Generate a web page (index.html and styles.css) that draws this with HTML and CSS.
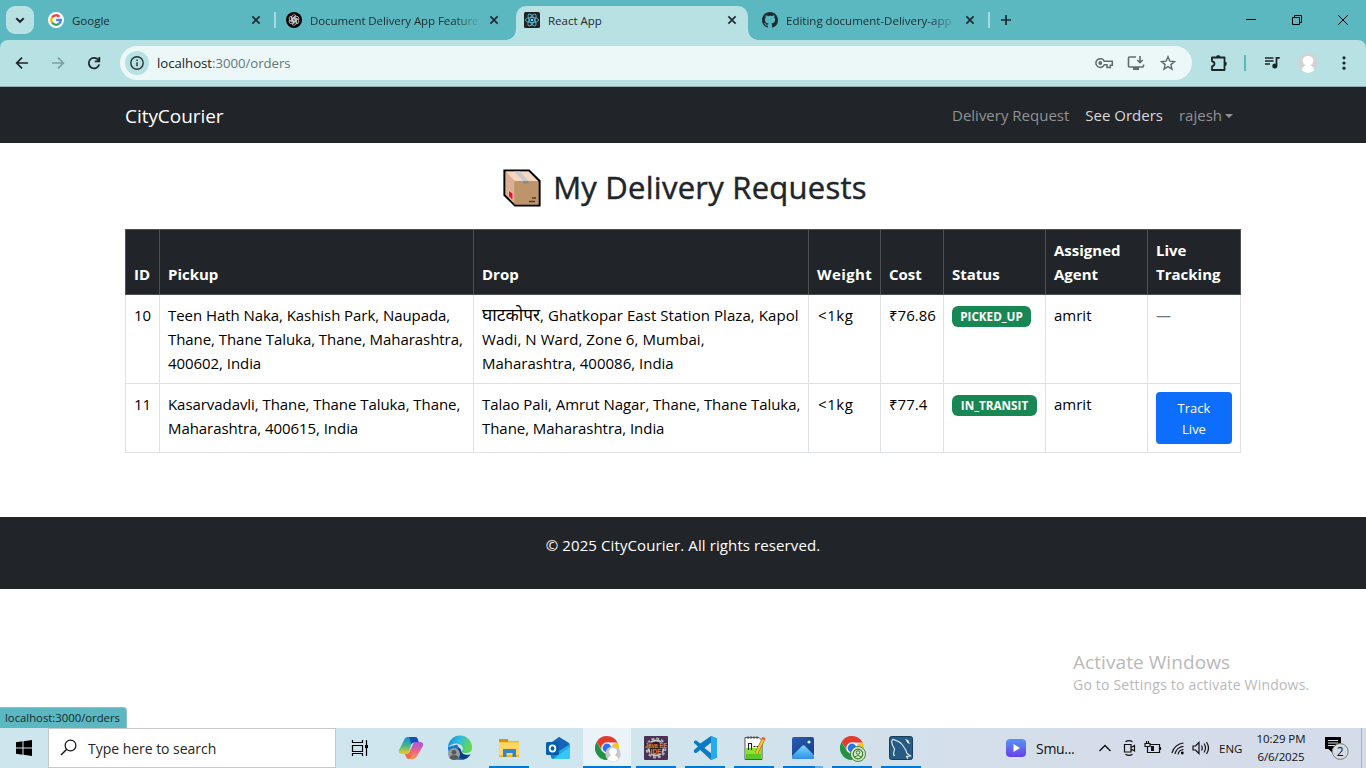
FILE: index.html
```html
<!DOCTYPE html>
<html lang="en">
<head>
<meta charset="utf-8">
<title>React App</title>
<link rel="stylesheet" href="styles.css">
</head>
<body>
<svg width="0" height="0" class="defs">
  <defs>
    <symbol id="x" viewBox="0 0 16 16"><path d="M4.4 4.4l7.2 7.2M11.6 4.4l-7.2 7.2" stroke="#1f2b2e" stroke-width="1.7" fill="none"/></symbol>
    <symbol id="chrome" viewBox="0 0 24 24">
      <path d="M12 12L22.4 6A12 12 0 0 1 12 24z" fill="#fbc116"/>
      <path d="M12 6.4h10.6A12 12 0 0 0 1.6 6l5.3 8z" fill="#e33b2e"/>
      <path d="M1.6 6l5.4 9 5 2.500 5-3L12 24A12 12 0 0 1 1.6 6z" fill="#229342"/>
      <circle cx="12" cy="12" r="5.7" fill="#fff"/><circle cx="12" cy="12" r="4.4" fill="#2b74e8"/>
    </symbol>
  </defs>
</svg>

<div class="tabstrip">
  <div class="tab-search"><svg width="12" height="12" viewBox="0 0 12 12"><path d="M2.3 4.2L6 7.8l3.7-3.6" fill="none" stroke="#1d2426" stroke-width="1.9"/></svg></div>
  <div class="tab tab-one">
    <svg width="16" height="16" viewBox="0 0 16 16"><circle cx="8" cy="8" r="8" fill="#fff"/><g fill="none" stroke-width="2.3"><path d="M4 5.5A4.8 4.8 0 0 1 11.5 4.7" stroke="#ea4335"/><path d="M4 5.5a4.8 4.8 0 0 0 0 5" stroke="#fbbc05"/><path d="M4 10.5a4.8 4.8 0 0 0 7.1 1.2" stroke="#34a853"/><path d="M11.1 11.7A4.8 4.8 0 0 0 12.8 8H8.2" stroke="#4285f4"/></g></svg>
    <span class="tab-title">Google</span><svg class="close" width="16" height="16"><use href="#x"/></svg><i class="sep"></i>
  </div>
  <div class="tab tab-two">
    <svg width="16" height="16" viewBox="0 0 16 16"><circle cx="8" cy="8" r="8" fill="#050505"/><g fill="none" stroke="#e9e9e9" stroke-width=".7"><path id="petal" d="M5.800 9.200V5a2.300 2.300 0 0 1 4.200-1.300L6.900 5.600v3.600"/><use href="#petal" transform="rotate(60 8 8)"/><use href="#petal" transform="rotate(120 8 8)"/><use href="#petal" transform="rotate(180 8 8)"/><use href="#petal" transform="rotate(240 8 8)"/><use href="#petal" transform="rotate(300 8 8)"/></g></svg>
    <span class="tab-title fade">Document Delivery App Feature</span><svg class="close" width="16" height="16"><use href="#x"/></svg>
  </div>
  <div class="tab tab-active">
    <svg width="16" height="16" viewBox="0 0 16 16"><rect width="16" height="16" rx="1.500" fill="#222"/><g fill="none" stroke="#58b5cf" stroke-width=".9"><ellipse cx="8" cy="8" rx="6.600" ry="2.600"/><ellipse cx="8" cy="8" rx="6.600" ry="2.600" transform="rotate(60 8 8)"/><ellipse cx="8" cy="8" rx="6.600" ry="2.600" transform="rotate(120 8 8)"/></g><circle cx="8" cy="8" r="1.300" fill="#61dafb"/></svg>
    <span class="tab-title">React App</span><svg class="close" width="16" height="16"><use href="#x"/></svg>
  </div>
  <div class="tab tab-four">
    <svg width="16" height="16" viewBox="0 0 16 16"><path fill="#1f2b30" d="M8 0C3.58 0 0 3.58 0 8c0 3.54 2.29 6.53 5.47 7.59.4.07.55-.17.55-.38 0-.19-.01-.82-.01-1.49-2.01.37-2.53-.49-2.69-.94-.09-.23-.48-.94-.82-1.13-.28-.15-.68-.52-.01-.53.63-.01 1.08.58 1.23.82.72 1.21 1.87.87 2.33.66.07-.52.28-.87.51-1.07-1.78-.2-3.64-.89-3.64-3.95 0-.87.31-1.59.82-2.15-.08-.2-.36-1.02.08-2.12 0 0 .67-.21 2.2.82.64-.18 1.32-.27 2-.27s1.36.09 2 .27c1.53-1.04 2.2-.82 2.2-.82.44 1.1.16 1.92.08 2.12.51.56.82 1.27.82 2.15 0 3.07-1.87 3.75-3.65 3.95.29.25.54.73.54 1.48 0 1.07-.01 1.93-.01 2.2 0 .21.15.46.55.38A8.01 8.01 0 0 0 16 8c0-4.42-3.58-8-8-8"/></svg>
    <span class="tab-title fade fade-far">Editing document-Delivery-app</span><svg class="close" width="16" height="16"><use href="#x"/></svg><i class="sep"></i>
  </div>
  <svg class="new-tab" width="16" height="16" viewBox="0 0 16 16"><path d="M8 3v10M3 8h10" stroke="#1d2a2d" stroke-width="1.700"/></svg>
  <div class="window-controls">
    <svg width="46" height="40" viewBox="0 0 46 40"><path d="M18 19.500h10" stroke="#000"/></svg>
    <svg width="46" height="40" viewBox="0 0 46 40"><path d="M18.500 17.500h7v7h-7zM20.500 17.500v-2h7v7h-2" fill="none" stroke="#000"/></svg>
    <svg width="46" height="40" viewBox="0 0 46 40"><path d="M18 15l10 10M28 15L18 25" fill="none" stroke="#000"/></svg>
  </div>
</div>

<div class="toolbar-back"><div class="toolbar">
  <svg class="nav" width="16" height="16" viewBox="0 0 16 16"><path d="M14 8H3M8 2.700L2.700 8 8 13.300" fill="none" stroke="#1d2426" stroke-width="1.700"/></svg>
  <svg class="nav" width="16" height="16" viewBox="0 0 16 16"><path d="M2 8h11M8 2.700L13.300 8 8 13.300" fill="none" stroke="#7f9da0" stroke-width="1.700"/></svg>
  <svg class="nav" width="16" height="16" viewBox="0 0 16 16"><path d="M12.500 5.200A5.300 5.300 0 1 0 13.200 9.400M13.300 2v4.400H8.800" fill="none" stroke="#1d2426" stroke-width="1.800"/></svg>
  <div class="omnibox">
    <span class="info"><svg width="16" height="16" viewBox="0 0 16 16"><circle cx="8" cy="8" r="6.200" fill="none" stroke="#263436" stroke-width="1.400"/><path d="M8 7.200v4M8 4.600v1.500" stroke="#263436" stroke-width="1.400"/></svg></span>
    <span class="url"><b>localhost</b>:3000/orders</span>
    <svg width="20" height="16" viewBox="0 0 20 16"><g fill="none" stroke="#5f6b6e" stroke-width="1.500"><path d="M10.300 6.300h8v4h-2v2.200h-3.300v-2.700h-2.700A4.400 4.400 0 1 1 10.300 6.300z"/></g><circle cx="6.300" cy="8" r="1.900" fill="#5f6b6e"/></svg>
    <svg class="install" width="18" height="16" viewBox="0 0 18 16"><path d="M9 2H2.500q-1 0-1 1v8q0 1 1 1h13q1 0 1-1V9.500M13 1v6.500M10.300 5L13 7.700 15.700 5" fill="none" stroke="#5f6b6e" stroke-width="1.600"/><path d="M6 12h6v3H6z" fill="#5f6b6e"/></svg>
    <svg class="star" width="16" height="16" viewBox="0 0 16 16"><path d="M8 1.800l1.800 4.300 4.700.4-3.600 3.100 1.100 4.600L8 11.700l-4 2.500 1.100-4.600L1.500 6.500l4.700-.4z" fill="none" stroke="#5f6b6e" stroke-width="1.400"/></svg>
  </div>
  <svg class="puzzle" width="18" height="18" viewBox="0 0 18 18"><path d="M2 3.500h12.500V16H2v-3.700c3.300-.4 3.300-4.600 0-5z" fill="none" stroke="#1d2426" stroke-width="1.800" stroke-linejoin="round"/><path d="M6 3.500a2.200 2.500 0 0 1 4.400 0zM14.500 7.500a2.300 2.200 0 0 1 0 4.400z" fill="#1d2426"/></svg>
  <i class="tool-sep"></i>
  <svg class="media" width="16" height="16" viewBox="0 0 16 16"><path d="M1 3h8.500M1 6h8.500M1 9h5M12.500 11V2.800h3.200" stroke="#1d2426" stroke-width="1.700" fill="none"/><circle cx="10.800" cy="11" r="2.500" fill="#1d2426"/></svg>
  <svg class="avatar" width="20" height="20" viewBox="0 0 20 20"><circle cx="10" cy="10" r="10" fill="#d2d1d3"/><path d="M3.800 17.300q.7-4 3.800-4.700Q4.600 10.500 4.600 7.500 5 3 10 3t5.400 4.500q0 3-3 5.100 3.100.7 3.800 4.700Q13.500 20 10 20t-6.200-2.700z" fill="#fff"/></svg>
  <svg class="dots" width="16" height="16" viewBox="0 0 16 16"><g fill="#1d2426"><circle cx="8" cy="2.800" r="1.600"/><circle cx="8" cy="8" r="1.600"/><circle cx="8" cy="13.200" r="1.600"/></g></svg>
</div></div>

<main class="viewport">
  <nav class="navbar">
    <span class="brand">CityCourier</span>
    <span class="links"><span class="link">Delivery Request</span><span class="link current">See Orders</span><span class="link">rajesh<i class="caret"></i></span></span>
  </nav>
  <h2 class="heading">
    <svg width="38" height="38" viewBox="0 0 38 38"><path d="M1.500 1.500H26L36.500 12v24.500H12L1.500 26z" fill="#c19a6b" stroke="#000" stroke-width="2.200"/><path d="M2.500 2.500H25.600L35 12H11.500z" fill="#f6d6c0"/><path d="M2.500 3l9 9v23L2.500 25.600z" fill="#d9b093"/><path d="M11.500 12.500h24v23h-24z" fill="#be946a"/><path d="M11 2.500h6L25.500 12H20z" fill="#c9c9c9"/><path d="M20 12h5.500v2.500H20z" fill="#8d8983"/><path d="M5.500 21l4.500 3v7l-4.500-4z" fill="#f6c4b8"/><path d="M6 22l3.500 2.500v6L6 27.300z" fill="#e81224"/><path d="M29 29h4M26 32.500h6" stroke="#4b3c30" stroke-width="1.300"/></svg>
    <span class="heading-text">My Delivery Requests</span>
  </h2>
  <table class="orders">
    <colgroup><col class="c-id"><col class="c-pick"><col class="c-drop"><col class="c-weight"><col class="c-cost"><col class="c-status"><col class="c-agent"><col class="c-live"></colgroup>
    <thead><tr><th>ID</th><th>Pickup</th><th>Drop</th><th class="wide">Weight</th><th>Cost</th><th>Status</th><th>Assigned<br>Agent</th><th>Live<br>Tracking</th></tr></thead>
    <tbody>
      <tr class="r1"><td>10</td><td class="pickup">Teen Hath Naka, Kashish Park, Naupada,<br>Thane, Thane Taluka, Thane, Maharashtra,<br>400602, India</td><td><span class="hindi">घाटकोपर</span><span class="loose">, Ghatkopar East Station Plaza, Kapol<br>Wadi, N Ward, Zone 6, Mumbai,</span><br>Maharashtra, 400086, India</td><td class="weight">&lt;1kg</td><td>₹76.86</td><td><span class="badge picked">PICKED_UP</span></td><td>amrit</td><td class="muted">—</td></tr>
      <tr class="r2"><td>11</td><td class="pickup">Kasarvadavli, Thane, Thane Taluka, Thane,<br>Maharashtra, 400615, India</td><td class="tight">Talao Pali, Amrut Nagar, Thane, Thane Taluka,<br>Thane, Maharashtra, India</td><td class="weight">&lt;1kg</td><td>₹77.4</td><td><span class="badge transit">IN_TRANSIT</span></td><td>amrit</td><td><span class="btn">Track<br>Live</span></td></tr>
    </tbody>
  </table>
  <footer class="footer"><span>© 2025 CityCourier. All rights reserved.</span></footer>
  <div class="watermark"><p class="wm-title">Activate Windows</p><p class="wm-text">Go to Settings to activate Windows.</p></div>
  <div class="status-bubble"><span>localhost:3000/orders</span></div>
</main>

<div class="taskbar">
  <div class="start"><svg width="18" height="18" viewBox="0 0 18 18"><path d="M1 3.200L7.500 2.300v6.200H1zM8.500 2.200L17 1v7.500H8.500zM1 9.500h6.500v6.200L1 14.800zM8.500 9.500H17V17l-8.500-1.200z" fill="#000"/></svg></div>
  <div class="search"><svg width="18" height="18" viewBox="0 0 18 18"><circle cx="10.500" cy="6.500" r="5.400" fill="none" stroke="#111" stroke-width="1.200"/><path d="M6.500 10.500L1 16" stroke="#111" stroke-width="1.400"/></svg><span>Type here to search</span></div>
  <div class="apps">
    <div class="app taskview"><svg width="24" height="24" viewBox="0 0 24 24"><path d="M4.500 4v2.500h10V4M4.500 9.500h10v6h-10zM4.500 20v-2.500h10V20M18.500 4v16" fill="none" stroke="#000" stroke-width="1.200"/><path d="M17 9h3v3h-3z"/></svg></div>
    <div class="app"><svg width="26" height="24" viewBox="0 0 26 24"><defs><linearGradient id="c1" x1="0" y1="0" x2="0" y2="1"><stop offset="0" stop-color="#168bdd"/><stop offset=".5" stop-color="#42b58e"/><stop offset="1" stop-color="#f2cd17"/></linearGradient><linearGradient id="c2" x1="0" y1="0" x2="0" y2="1"><stop offset="0" stop-color="#a05be0"/><stop offset=".5" stop-color="#e95f91"/><stop offset="1" stop-color="#f79a4e"/></linearGradient></defs><path d="M6 4q1-3 4-3h7q2 0 2.700 2l1 3.500H16q-2 0-2.700 2L11 16q-.8 2-3 2H4q-4 0-3-4z" fill="url(#c1)"/><path d="M11 1h6q2 0 2.700 2l1 3.500H16q-2 0-2.700 2z" fill="#174fb9"/><path d="M19 20q-1 3-4 3h-4q-2 0-2.700-2L7 18h2q2 0 2.700-2L15 8q.8-2 3-2h4q4 0 3 4z" fill="url(#c2)"/><path d="M7 18h2q2 0 2.700-2l1.300-3 .5 7q-.5 2-2.500 3-2 0-2.700-2z" fill="#f06a42"/></svg></div>
    <div class="app"><svg width="26" height="26" viewBox="0 0 26 26"><defs><linearGradient id="e1" x1="0" y1="0" x2="1" y2=".3"><stop stop-color="#1684d8"/><stop offset=".5" stop-color="#30bde0"/><stop offset="1" stop-color="#62d850"/></linearGradient></defs><path d="M1 12A12 12 0 0 0 13 25q7 0 10.500-5.500Q15 21 14 15.500l-4-6z" fill="#1678c8"/><path d="M1 12A12 12 0 0 1 25 13q0 5-6 5-5 0-4-2 2-3-1-6Q8 6 1 12z" fill="url(#e1)"/><path d="M10.500 14q-2 9 6 10.500 4.500-1.500 7-5-8 2-9.500-4l-1-2.500z" fill="#123c82"/><circle cx="7" cy="19" r="6" fill="#989b9d"/><circle cx="7" cy="17.300" r="2.400" fill="#56595a"/><path d="M2.500 23q.5-3 4.500-3t4.500 3Q7 27 2.500 23z" fill="#56595a"/></svg></div>
    <div class="app running"><svg width="24" height="24" viewBox="0 0 24 24"><path d="M2 3h8l2 2h10v16H2z" fill="#f1b91e"/><path d="M2 3h9v3H2z" fill="#d9920c"/><path d="M2 6.500h20.500V19H2z" fill="#ffd766"/><path d="M6 13h13v8h-3.500v-4H9.500v4H6z" fill="#3984c8"/></svg></div>
    <div class="app"><svg width="26" height="24" viewBox="0 0 26 24"><path d="M4 8L14 1l10 6v14q0 2-2 2H8q-2 0-2-2z" fill="#1486d8"/><path d="M14 1l11 7-11 7-8-7z" fill="#1663b8"/><path d="M25 8v13q0 2-2 2h-8l-5-5z" fill="#26a8ec"/><path d="M25 11v10q0 2-2 2H8z" fill="#37c7f5"/><rect x="1" y="6" width="13" height="13" rx="1.500" fill="#075eaf"/><ellipse cx="7.500" cy="12.500" rx="2.800" ry="3.200" fill="none" stroke="#fff" stroke-width="1.800"/></svg></div>
    <div class="app selected"><svg width="28" height="28" viewBox="0 0 28 28"><use href="#chrome" x="2" y="2" width="24" height="24"/><circle cx="20" cy="20" r="7.700" fill="#c7c7c9"/><path d="M14.500 25q1-3 3.500-3.500-2-2-2-4.500 1-3 4-3t4 3q0 2.500-2 4.500 2.500.5 3.500 3.500-5.500 5-11 0z" fill="#fff"/></svg></div>
    <div class="app running"><svg class="eclipse" width="24" height="24" viewBox="0 0 24 24"><rect width="24" height="24" rx="1" fill="#493158"/><circle cx="12" cy="12" r="7.500" fill="#242229" stroke="#c8c3c3" stroke-width="2"/><circle cx="12" cy="12" r="9.500" fill="none" stroke="#b6aeb2" stroke-width="2" stroke-dasharray="3 1.970"/><path d="M1 6.500h22v6H1zM6 12.500h12v5.500H6z" fill="#2a2029" opacity=".75"/><text x="12" y="11.800" class="jee" textLength="22" lengthAdjust="spacingAndGlyphs">Java EE</text><text x="12" y="17.700" class="jee">IDE</text></svg></div>
    <div class="app running"><svg width="24" height="24" viewBox="0 0 24 24"><path d="M18 0l6 2.500v19L18 24 7.200 14 3 17.300 1 16.200V14l4-3.500L1 7V5.300l2-1.100 4.200 3.200zM18 6.500l-6.500 5.500 6.500 5.300z" fill="#087bc4" fill-rule="evenodd"/><path d="M18 0l6 2.500v19L18 24z" fill="#29a9ef"/></svg></div>
    <div class="app running"><svg width="24" height="26" viewBox="0 0 24 26"><path d="M3 2.500h14l3 3v19H3z" fill="#fff" stroke="#555"/><path d="M4 13h15v11H4z" fill="#8fe02f"/><path d="M4 19h15v5H4z" fill="#56c927"/><path d="M6 1v3M9 1v3M12 1v3M15 1v3" stroke="#555"/><path d="M6.500 8v7M6 8.500h4M9.500 8v7M11.500 11.500h2M14.500 11.500h2" stroke="#222" stroke-width="1.100"/><path d="M22 3L14.500 18" stroke="#a36b12" stroke-width="3.500"/><path d="M22 3L14.500 18" stroke="#ffc52c" stroke-width="2.300"/><path d="M20.500 2l3 1-1 2-3-1z" fill="#e65b37"/></svg></div>
    <div class="app running photos"><svg width="24" height="24" viewBox="0 0 24 24"><defs><linearGradient id="p1" x1="0" y1="0" x2="1" y2="1"><stop stop-color="#285bb1"/><stop offset="1" stop-color="#153c82"/></linearGradient><linearGradient id="p2" x1="0" y1="0" x2="0" y2="1"><stop stop-color="#78d6ff"/><stop offset="1" stop-color="#328ee6"/></linearGradient></defs><rect x="1" y="1" width="22" height="22" rx="2" fill="url(#p1)"/><path d="M1 20L11 10q1.500-1.500 3 0l9 9v2q0 2-2 2H3q-2 0-2-2z" fill="url(#p2)"/><circle cx="18" cy="6" r="1.600" fill="#d9f4ff"/></svg></div>
    <div class="app running"><svg width="28" height="28" viewBox="0 0 28 28"><use href="#chrome" x="2" y="2" width="24" height="24"/><circle cx="20" cy="20" r="7.500" fill="#d5edc6" stroke="#47823b"/><circle cx="20" cy="20" r="4.800" fill="none" stroke="#3c7a35" stroke-width="1.200"/><circle cx="20" cy="18.500" r="1.800" fill="none" stroke="#3c7a35"/><path d="M16.500 23q3.500-3 7 0" fill="none" stroke="#3c7a35"/></svg></div>
    <div class="app running"><svg width="24" height="24" viewBox="0 0 24 24"><rect x=".5" y=".5" width="23" height="23" rx="2" fill="#255b84" stroke="#193d5c"/><path d="M6 19q-1.500 1-1.500-1l1-5Q2 7 3 4.500q1-2 3.500 0 5 1 8 6 3 4 3.500 7l3.500 2.500-4 .5 1.500 2.500" fill="none" stroke="#eef5f9" stroke-width="1.100"/><path d="M16 3l3 1 1.500 3 1 1-3-1-1-2z" fill="#fff"/></svg></div>
  </div>
  <div class="tray">
    <svg class="play" width="20" height="20" viewBox="0 0 20 20"><defs><linearGradient id="pl" x1="0" y1="0" x2="0" y2="1"><stop stop-color="#5793f8"/><stop offset="1" stop-color="#6841e5"/></linearGradient></defs><rect y="1" width="20" height="18" rx="4" fill="url(#pl)"/><path d="M7.500 6l6.500 4-6.500 4z" fill="#fff"/></svg>
    <span class="smu">Smu...</span>
    <svg class="chev" width="12" height="16" viewBox="0 0 12 16"><path d="M.5 11L6 5.500l5.500 5.500" fill="none" stroke="#111" stroke-width="1.300"/></svg>
    <svg class="cam" width="14" height="18" viewBox="0 0 14 18"><path d="M2.500 2.800q3.500-2.500 7 0M2.500 15.200q3.500 2.500 7 0M1.500 5.500h6.500v7.500H1.500zM8 8.500l3.500-2v5.500l-3.500-2" fill="none" stroke="#111" stroke-width="1.200"/></svg>
    <svg class="bat" width="18" height="16" viewBox="0 0 18 16"><path d="M6.500 4.500h9v8h-9M16.500 7v3M2.500 1v2.500M4.500 1v2.500M1 3.500h5v3H1zM3.500 6v6.500h3" fill="none" stroke="#111" stroke-width="1.200"/><path d="M7 6h3v5H7z" fill="#111"/></svg>
    <svg class="wifi" width="16" height="16" viewBox="0 0 16 16"><path d="M2 13A13 13 0 0 1 13.500 3M5 14A9.500 9.500 0 0 1 13.500 6.300M8 14.500a6 6 0 0 1 5.500-5" fill="none" stroke="#111" stroke-width="1.200"/><circle cx="12.300" cy="13" r="1.400"/></svg>
    <svg class="vol" width="18" height="16" viewBox="0 0 18 16"><path d="M1 6h2.500L7 2.500v11L3.500 10H1zM9.500 5.500q1.500 2.500 0 5M12 3.500q3 4.500 0 9M14.500 2q4 6 0 12" fill="none" stroke="#111" stroke-width="1.200"/></svg>
    <span class="eng">ENG</span>
    <div class="clock"><span class="time">10:29 PM</span><span class="date">6/6/2025</span></div>
    <div class="notice"><svg width="24" height="24" viewBox="0 0 24 24"><path d="M0 1h16v12H7v3.500L3.500 13H0z"/><path d="M3 4.500h10M3 7h10M3 9.500h7" stroke="#d6dde9"/><circle cx="15.200" cy="15.500" r="7.900" fill="#d7dbe2" stroke="#777b80"/><text x="15.200" y="20" class="count">2</text></svg></div>
  </div>
</div>
</body>
</html>
```
FILE: styles.css
```css
* { box-sizing: border-box; }
body { margin: 0; width: 1366px; height: 768px; overflow: hidden; background: #fff; font-family: "Open Sans", "Noto Sans", "Noto Sans Devanagari", sans-serif; white-space: nowrap; display: flex; flex-direction: column; }
svg { display: block; flex: none; }
.defs { position: absolute; }

.tabstrip { height: 40px; background: #5bb7c0; display: flex; align-items: center; padding-left: 6px; flex: none; font-size: 11.5px; color: #1c2b2e; }
.tab-search { width: 28px; height: 28px; border-radius: 9px; background: #b8e1e4; display: flex; align-items: center; justify-content: center; }
.tab { height: 34px; margin-top: 6px; padding: 0 0 6px 8px; display: flex; align-items: center; position: relative; }
.tab-title { flex: 1; margin: 0 8px; line-height: 18px; padding-top: 1px; }
.fade { min-width: 0; letter-spacing: -.08px; background: linear-gradient(90deg, #1c2b2e calc(100% - 24px), rgba(28, 43, 46, .1)); -webkit-background-clip: text; background-clip: text; color: transparent; }
.fade-far { letter-spacing: 0; }
.sep { width: 2px; height: 16px; background: #a9dadf; margin-left: 10px; }
.tab-one { width: 236px; margin-left: 6px; }
.tab-two { width: 240px; padding-right: 16px; margin-left: 2px; margin-right: -2px; }
.tab-active { width: 232px; background: #b8e1e4; border-radius: 10px 10px 0 0; padding-right: 8px; }
.tab-active::before, .tab-active::after { content: ""; position: absolute; bottom: 0; width: 10px; height: 10px; }
.tab-active::before { left: -10px; background: radial-gradient(circle at 0 0, transparent 9.5px, #b8e1e4 10px); }
.tab-active::after { right: -10px; background: radial-gradient(circle at 100% 0, transparent 9.5px, #b8e1e4 10px); }
.tab-four { width: 242px; padding-left: 14px; }
.new-tab { margin-left: 8px; }
.window-controls { display: flex; margin-left: auto; }

.toolbar-back { background: #5bb7c0; height: 47px; flex: none; }
.toolbar { height: 47px; background: #b8e1e4; border-bottom: 1px solid #8fb0b4; border-radius: 8px 8px 0 0; display: flex; align-items: center; padding-left: 14px; }
.nav { margin-right: 20px; }
.omnibox { width: 1072px; height: 34px; margin-left: -2px; border-radius: 17px; background: #ecf8f8; display: flex; align-items: center; padding: 0 16px 0 5px; }
.info { width: 24px; height: 24px; border-radius: 50%; background: #b8e1e4; display: grid; place-items: center; }
.url { flex: 1; margin-left: 8px; font-size: 13.2px; letter-spacing: -.03px; color: #64777a; }
.url b { font-weight: 400; color: #1d2426; }
.install { margin-left: 13px; }
.star { margin-left: 15px; }
.puzzle { margin: 0 0 1px 18px; }
.tool-sep { width: 2px; height: 16px; background: #5bb7c0; margin-left: 16px; }
.media { margin-left: 18px; }
.avatar { margin-left: 18px; }
.dots { margin-left: 18px; }

.viewport { height: 641px; position: relative; flex: none; }
.navbar { height: 56px; background: #212529; display: flex; justify-content: space-between; align-items: center; padding: 0 133px 0 125px; }
.brand { color: #fff; font-size: 19px; letter-spacing: -.05px; padding-top: 2px; }
.links { display: flex; gap: 16px; font-size: 15px; }
.link { color: #909294; }
.current { color: #d7d8d9; }
.caret { display: inline-block; border: 4.5px solid transparent; border-top-color: #909294; border-bottom: 0; margin-left: 3px; vertical-align: 3px; }
.heading { margin: 24px 0 0; padding-left: 4px; height: 42px; display: flex; align-items: center; justify-content: center; gap: 12px; font-size: 31px; line-height: 38px; letter-spacing: .25px; font-weight: 500; -webkit-text-stroke: .45px #212529; color: #212529; }
.heading-text { padding-bottom: 2px; }
.orders { margin: 20px 0 0 125px; width: 1116px; border-collapse: collapse; table-layout: fixed; font-size: 15px; line-height: 24px; color: #000; }
.c-id { width: 34px; } .c-pick { width: 314px; } .c-drop { width: 335px; } .c-weight { width: 72px; }
.c-cost { width: 63px; } .c-status { width: 102px; } .c-agent { width: 102px; } .c-live { width: 93px; }
.orders th, .orders td { border: 1px solid #dee2e6; padding: 8px; text-align: left; vertical-align: top; }
.orders th { background: #212529; color: #fff; border-color: #4d5154; vertical-align: bottom; font-weight: 700; height: 65px; }
.orders .wide { letter-spacing: .4px; }
.orders .weight { letter-spacing: .6px; padding-left: 9px; }
.pickup { letter-spacing: -.06px; }
.tight { letter-spacing: -.05px; }
.loose { letter-spacing: .07px; }
.hindi { font-size: 17.3px; line-height: 20px; }
.r1 { height: 89px; }
.r2 { height: 69px; }
.orders .muted { color: #6c757d; }
.badge { display: block; margin-top: 3px; height: 21px; line-height: 21px; border-radius: 6px; background: #198754; color: #fff; font-weight: 700; font-size: 11.7px; text-align: center; }
.picked { width: 79px; }
.transit { width: 85px; }
.btn { display: block; width: 76px; height: 52px; border-radius: 4px; background: #0d6efd; color: #fff; font-size: 13px; line-height: 21px; padding-top: 6px; text-align: center; }
.footer { margin-top: 64px; height: 72px; background: #212529; color: #fff; font-size: 15px; letter-spacing: .1px; line-height: 24px; padding-top: 16px; text-align: center; }
.watermark { position: absolute; left: 1073px; top: 562px; color: #b9b9b9; }
.watermark p { margin: 0; }
.wm-title { font-size: 19px; line-height: 26px; letter-spacing: .07px; }
.wm-text { font-size: 14px; line-height: 20px; letter-spacing: .2px; }
.status-bubble { position: absolute; left: 0; bottom: 0; width: 127px; height: 21px; background: #5bb7c0; border-top-right-radius: 4px; border-top: 1px solid #8ac4ca; border-right: 1px solid #8ac4ca; font-size: 11.3px; line-height: 20px; padding-left: 5px; color: #15282b; }

.taskbar { height: 40px; flex: none; display: flex; background: linear-gradient(90deg, #cde6ee, #d0e5ed 45%, #d4dfea 70%, #d4dbe9); color: #111; }
.start { width: 48px; padding: 11px 15px; }
.search { width: 288px; background: #fff; border: 1px solid #c8c8c8; display: flex; align-items: center; padding-left: 11px; gap: 10px; font-size: 14px; letter-spacing: -.03px; color: #262626; }
.apps { display: flex; gap: 1px; }
.app { width: 48px; height: 40px; display: grid; place-items: center; position: relative; }
.taskview { margin-right: 2px; }
.running::after, .selected::after { content: ""; position: absolute; bottom: 0; left: 4px; width: 40px; height: 2px; background: #0078d7; }
.selected { background: #eaf4f8; }
.selected::after { left: 0; width: 48px; }
.photos::after { background: linear-gradient(90deg, #0078d7 32px, #65aee7 32px); }
.eclipse { overflow: visible; }
.jee { font: 700 6.5px "Liberation Sans", sans-serif; fill: #ef7d22; text-anchor: middle; }
.tray { margin-left: auto; display: flex; align-items: center; font-size: 14px; border-right: 1px solid #a7b0bd; margin-right: 4px; }
.smu { width: 53px; margin-left: 10px; letter-spacing: -.3px; }
.chev { margin-left: 10px; }
.cam { margin-left: 12px; }
.bat { margin-left: 7px; }
.wifi { margin-left: 8px; }
.vol { margin-left: 6px; }
.eng { width: 24px; margin-left: 9px; font-size: 11.5px; }
.clock { width: 52px; margin-left: 12px; display: flex; flex-direction: column; align-items: center; font-size: 11.5px; line-height: 18px; letter-spacing: -.1px; }
.notice { width: 36px; margin-left: 18px; }
.count { font: 12px "Open Sans", sans-serif; text-anchor: middle; fill: #111; }
```
